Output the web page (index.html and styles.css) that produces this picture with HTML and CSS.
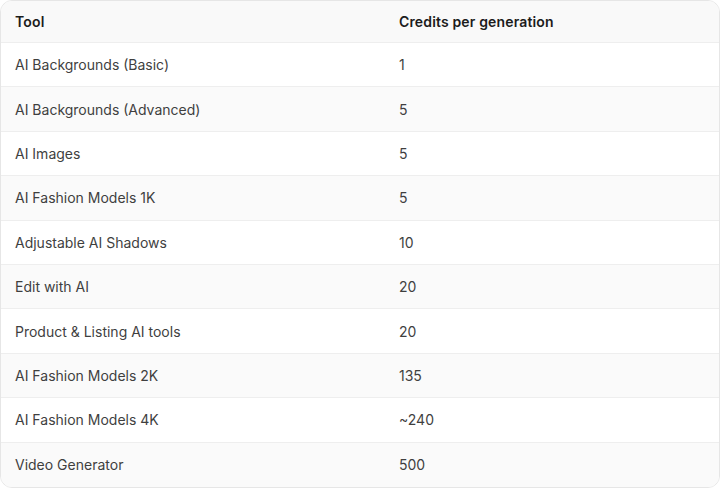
FILE: index.html
```html
<!DOCTYPE html>
<html>
<head>
<meta charset="utf-8">
<link rel="stylesheet" href="styles.css">
</head>
<body>
<div class="card">
  <table class="credits">
    <thead>
      <tr><th class="col-tool">Tool</th><th>Credits per generation</th></tr>
    </thead>
    <tbody>
      <tr><td>AI Backgrounds (Basic)</td><td>1</td></tr>
      <tr><td>AI Backgrounds (Advanced)</td><td>5</td></tr>
      <tr><td>AI Images</td><td>5</td></tr>
      <tr><td>AI Fashion Models 1K</td><td>5</td></tr>
      <tr><td>Adjustable AI Shadows</td><td>10</td></tr>
      <tr><td>Edit with AI</td><td>20</td></tr>
      <tr><td>Product &amp; Listing AI tools</td><td>20</td></tr>
      <tr><td>AI Fashion Models 2K</td><td>135</td></tr>
      <tr><td>AI Fashion Models 4K</td><td>~240</td></tr>
      <tr><td>Video Generator</td><td>500</td></tr>
    </tbody>
  </table>
</div>
</body>
</html>
```
FILE: styles.css
```css
html, body {
  margin: 0;
  padding: 0;
  background: #ffffff;
}
body {
  font-family: Inter, "Noto Sans", "Liberation Sans", sans-serif;
  font-size: 14px;
  color: #3f3f3f;
}
.card {
  width: 720px;
  height: 488px;
  box-sizing: border-box;
  border: 1px solid #e6e6e6;
  border-radius: 12px;
  overflow: hidden;
}
.credits {
  width: 100%;
  border-collapse: separate;
  border-spacing: 0;
  table-layout: fixed;
}
.col-tool {
  width: 384px;
}
.credits th,
.credits td {
  box-sizing: border-box;
  text-align: left;
  padding: 0 14px;
  border-bottom: 1px solid #eeeeee;
}
.credits th {
  height: 42px;
  background: #f9f9f9;
  color: #1c1c1c;
  font-weight: 600;
  letter-spacing: 0.15px;
}
.credits td {
  height: 44.4px;
}
.credits tbody tr:nth-child(even) td {
  background: #fafafa;
}
.credits tbody tr:last-child td {
  border-bottom: none;
}
```
